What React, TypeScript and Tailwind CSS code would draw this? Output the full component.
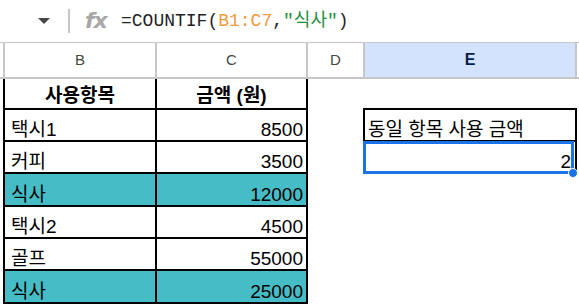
const ROWS: { item: string; amount: string; header?: boolean; teal?: boolean; h: string }[] = [
  { item: '사용항목', amount: '금액 (원)', header: true, h: 'h-[31px]' },
  { item: '택시1', amount: '8500', h: 'h-[32px]' },
  { item: '커피', amount: '3500', h: 'h-[32px]' },
  { item: '식사', amount: '12000', teal: true, h: 'h-[33px]' },
  { item: '택시2', amount: '4500', h: 'h-[32px]' },
  { item: '골프', amount: '55000', h: 'h-[32px]' },
  { item: '식사', amount: '25000', teal: true, h: 'h-[33px]' },
]

function FormulaBar() {
  return (
    <div className="flex h-[43px] items-center border-b border-[#c7c7c7]">
      <svg className="ml-[38px]" width="12" height="6" viewBox="0 0 12 6" aria-hidden>
        <path d="M0 0h12L6 6z" fill="#444746" />
      </svg>
      <div className="ml-[18px] h-[24px] w-[2px] bg-[#c7c7c7]" />
      <span className="ml-[15px] w-[22px] font-['DejaVu_Sans',sans-serif] text-[22px] font-bold italic leading-none tracking-[-1px] text-[#a8a8a8]">
        fx
      </span>
      <span className="ml-[14px] whitespace-pre font-['Liberation_Mono','Noto_Sans_CJK_KR',monospace] text-[18px] leading-none text-[#1f1f1f]">
        =COUNTIF(<span className="text-[#f29b3d]">B1:C7</span>,
        <span className="text-[#1e8e3e]">"식사"</span>)
      </span>
    </div>
  )
}

function ColumnHeaders() {
  const cell = 'flex items-center justify-center border-r-2 border-[#c7c7c7] text-[15px]'
  return (
    <div className="flex h-[36px] border-b-2 border-[#c7c7c7] text-[#444746]">
      <div className="w-[5px] border-r-2 border-[#c7c7c7]" />
      <div className={`${cell} w-[152px]`}>B</div>
      <div className={`${cell} w-[151px]`}>C</div>
      <div className={`${cell} w-[57px]`}>D</div>
      <div className={`${cell} w-[212px] bg-[#d3e3fd] text-[16px] font-bold text-[#041e49]`}>E</div>
    </div>
  )
}

function ECell({ index }: { index: number }) {
  if (index === 0) return <div className="w-[214px] border-b-2 border-black" />
  if (index === 1)
    return (
      <div className="flex w-[214px] items-end border-x-2 border-b-2 border-black pb-[1px] pl-[3px] leading-none">
        동일 항목 사용 금액
      </div>
    )
  if (index === 2)
    return (
      <div className="relative flex w-[214px] items-end justify-end border-x-2 border-b-2 border-black pb-[1px] pr-[4px] leading-none">
        2
        <div className="absolute -left-[2px] -top-[1px] h-[33px] w-[211px] border-[3px] border-[#1a73e8]" />
        <div className="absolute -bottom-[6px] right-[-3px] h-[10px] w-[10px] rounded-full border border-white bg-[#1a73e8]" />
      </div>
    )
  return <div className="w-[214px]" />
}

export default function App() {
  return (
    <div className="h-[306px] w-[579px] overflow-hidden bg-white font-['Liberation_Sans','Noto_Sans_CJK_KR',sans-serif] text-black">
      <FormulaBar />
      <ColumnHeaders />
      <div className="flex flex-col text-[19px]">
        {ROWS.map((row, i) => {
          const bg = row.teal ? 'bg-[#46bdc6]' : 'bg-white'
          return (
            <div key={i} className={`flex ${row.h}`}>
              <div className="w-[3px]" />
              <div
                className={`flex w-[154px] items-end border-x-2 border-b-2 border-black pb-[1px] leading-none ${bg} ${
                  row.header ? 'justify-center pb-[3px] font-bold' : 'pl-[6px]'
                }`}
              >
                {row.item}
              </div>
              <div
                className={`flex w-[151px] items-end border-r-2 border-b-2 border-black pb-[1px] leading-none ${bg} ${
                  row.header ? 'justify-center pb-[3px] font-bold' : 'justify-end pr-[3px]'
                }`}
              >
                {row.amount}
              </div>
              <div className="w-[55px]" />
              <ECell index={i} />
            </div>
          )
        })}
      </div>
    </div>
  )
}
